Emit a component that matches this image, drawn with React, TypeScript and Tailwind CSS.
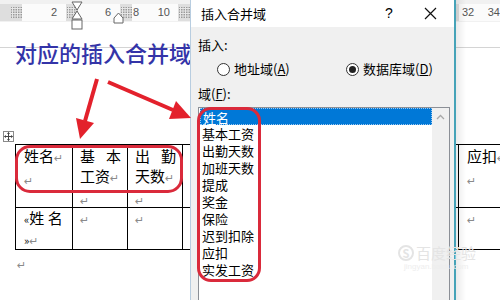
import React from "react";

const cjk = "font-['Noto_Sans_CJK_SC',sans-serif]";

function GridMark() {
  return (
    <svg width="11" height="11" viewBox="0 0 11 11">
      <rect x="0" y="0" width="11" height="11" fill="#9a9a9a" />
      {[1.5, 4, 6.5, 9].map((v) => (
        <g key={v}>
          <line x1={v} y1="0" x2={v} y2="11" stroke="#e6e6e6" strokeWidth="1" />
          <line x1="0" y1={v} x2="11" y2={v} stroke="#e6e6e6" strokeWidth="1" />
        </g>
      ))}
    </svg>
  );
}

function Para() {
  return <span className="text-[11px] text-[#8a8a8a] font-['DejaVu_Sans',sans-serif]">↵</span>;
}

function Ruler() {
  return (
    <div className="relative h-[22px] bg-[#f1f1f1] pt-[4px]">
      <div className="flex h-[17px] text-[11px] text-[#555] font-['Liberation_Sans',sans-serif] leading-[17px]">
        <div className="w-[10px] bg-[#dedede]" />
        <div className="w-[12px] bg-[#dedede] flex items-center justify-center"><GridMark /></div>
        <div className="w-[44px] bg-[#fbfbfb] flex justify-end pr-[9px]">2</div>
        <div className="w-[12px] bg-[#dedede] flex items-center justify-center"><GridMark /></div>
        <div className="w-[42px] bg-[#fbfbfb] flex justify-end pr-[9px]">6</div>
        <div className="w-[12px] bg-[#dedede] flex items-center justify-center"><GridMark /></div>
        <div className="w-[46px] bg-[#fbfbfb] flex justify-between pl-[1px] pr-[8px]">
          <span>8</span>
          <span>10</span>
        </div>
        <div className="w-[12px] bg-[#dedede] flex items-center justify-center"><GridMark /></div>
        <div className="w-[265px] bg-[#fbfbfb]" />
        <div className="w-[4px] bg-[#dedede]" />
        <div className="flex-1 bg-[#fbfbfb] flex justify-between pl-[3px]">
          <span>32</span>
          <span>34</span>
        </div>
      </div>
      {/* indent markers */}
      <svg className="absolute left-[71px] top-0" width="12" height="31" viewBox="0 0 12 31">
        <path d="M1 2 H11 L6 10 Z" fill="#fff" stroke="#666" />
        <path d="M6 11 L11 19 H1 Z" fill="#fff" stroke="#666" />
        <rect x="1" y="20" width="10" height="9" fill="#fff" stroke="#666" />
      </svg>
      <svg className="absolute left-[113px] top-[12px]" width="11" height="12" viewBox="0 0 11 12">
        <path d="M5.5 1 L10 6 V11 H1 V6 Z" fill="#fff" stroke="#666" />
      </svg>
    </div>
  );
}

function Row1() {
  return (
    <div className="flex h-[63px] border-b border-black text-[15px] leading-[20px] text-black">
      <div className="w-[57px] shrink-0 border-l border-black pl-[8px] pt-[1px]">
        <div>姓名<Para /></div>
        <div><Para /></div>
      </div>
      <div className="w-[55px] shrink-0 border-l border-black pl-[7px] pr-[6px] pt-[1px]">
        <div className="flex justify-between"><span>基</span><span>本</span></div>
        <div>工资<Para /></div>
        <div><Para /></div>
      </div>
      <div className="w-[55px] shrink-0 border-l border-black pl-[7px] pr-[6px] pt-[1px]">
        <div className="flex justify-between"><span>出</span><span>勤</span></div>
        <div>天数<Para /></div>
        <div><Para /></div>
      </div>
      <div className="w-[276px] shrink-0 border-l border-black" />
      <div className="w-[60px] shrink-0 border-l border-black pl-[8px] pt-[1px]">
        <div>应扣<Para /></div>
        <div><Para /></div>
      </div>
    </div>
  );
}

function Row2() {
  return (
    <div className="flex h-[42px] border-b border-black text-[15px] leading-[20px] text-black">
      <div className="w-[57px] shrink-0 border-l border-black pl-[8px]">
        <div>
          <span className="text-[11px]">«</span>姓 名
        </div>
        <div>
          <span className="text-[11px]">»</span>
          <Para />
        </div>
      </div>
      <div className="w-[55px] shrink-0 border-l border-black pl-[7px]"><Para /></div>
      <div className="w-[55px] shrink-0 border-l border-black pl-[7px]"><Para /></div>
      <div className="w-[276px] shrink-0 border-l border-black" />
      <div className="w-[60px] shrink-0 border-l border-black pl-[8px]"><Para /></div>
    </div>
  );
}

function Radio({ checked, label, hot }: { checked?: boolean; label: string; hot: string }) {
  return (
    <div className="flex items-center gap-[4px]">
      <div className="w-[13px] h-[13px] rounded-full border border-[#333] bg-white flex items-center justify-center">
        {checked && <div className="w-[7px] h-[7px] rounded-full bg-[#222]" />}
      </div>
      <span>
        {label}(<span className="underline">{hot}</span>)
      </span>
    </div>
  );
}

function Dialog() {
  const fields = ["姓名", "基本工资", "出勤天数", "加班天数", "提成", "奖金", "保险", "迟到扣除", "应扣", "实发工资"];
  return (
    <div className={`absolute left-[190px] top-0 w-[266px] h-[300px] bg-[#f0f0f0] border-l border-l-[#b8cde0] border-r-2 border-r-[#46a3b8] text-[13px] text-black ${cjk}`}>
      <div className="h-[27px] bg-white flex items-center pl-[10px]">
        <span className="flex-1">插入合并域</span>
        <span className="w-[12px] text-center mr-[29px] text-[14px] font-['Liberation_Sans',sans-serif]">?</span>
        <svg className="mr-[17px]" width="13" height="13" viewBox="0 0 13 13">
          <path d="M1 1 L12 12 M12 1 L1 12" stroke="#111" strokeWidth="1.2" />
        </svg>
      </div>
      <div className="h-[20px] leading-[20px] mt-[8px] pl-[7px]">插入:</div>
      <div className="h-[20px] mt-[4px] flex items-center pl-[26px]">
        <div className="w-[129px]">
          <Radio label="地址域" hot="A" />
        </div>
        <Radio checked label="数据库域" hot="D" />
      </div>
      <div className="h-[20px] leading-[20px] mt-[5px] pl-[7px]">
        域(<span className="underline">F</span>):
      </div>
      <div className="mt-[3px] ml-[7px] w-[252px] h-[200px] border border-[#8b8f96] bg-white flex">
        <div className="flex-1 pt-[0px]">
          {fields.map((f, i) => (
            <div
              key={f}
              className={`h-[17px] leading-[17px] ml-[1px] pl-[2px] ${
                i === 0 ? "bg-[#0078d7] text-white border border-dotted border-[#9cc8f0] leading-[15px]" : ""
              }`}
            >
              {f}
            </div>
          ))}
        </div>
        <div className="w-[17px] bg-[#f0f0f0] flex justify-center pt-[6px]">
          <svg width="9" height="6" viewBox="0 0 9 6">
            <path d="M1 5 L4.5 1.5 L8 5" fill="none" stroke="#a8a8a8" strokeWidth="1.3" />
          </svg>
        </div>
      </div>
    </div>
  );
}

export default function App() {
  return (
    <div className={`relative w-[500px] h-[300px] overflow-hidden bg-white ${cjk}`}>
      <div className="h-[48px] border-b border-[#d4d4d4]">
        <Ruler />
      </div>
      <div className="-mt-[4px] pl-[15px] h-[22px] leading-[22px] text-[22px] text-[#3434a8] font-['Liberation_Serif','Noto_Sans_CJK_SC',serif] font-medium">
        对应的插入合并域
      </div>

      {/* table move handle */}
      <div className="mt-[65px] ml-[3px] w-[11px] h-[11px] border border-[#8a8a8a] flex items-center justify-center">
        <svg width="9" height="9" viewBox="0 0 9 9">
          <path d="M4.5 0.5 V8.5 M0.5 4.5 H8.5" stroke="#444" strokeWidth="1" />
          <path d="M4.5 0 L3 2 H6 Z M4.5 9 L3 7 H6 Z M0 4.5 L2 3 V6 Z M9 4.5 L7 3 V6 Z" fill="#444" />
        </svg>
      </div>

      <div className="mt-[2px] ml-[15px] border-t border-black">
        <Row1 />
        <Row2 />
      </div>
      <div className="pl-[17px] mt-[2px] leading-[20px]"><Para /></div>

      {/* annotation: table header ring */}
      <div className="absolute left-[15px] top-[145px] w-[168px] h-[48px] rounded-[15px] border-[3px] border-[#da2a3b]" />

      <Dialog />

      {/* dialog shadow */}
      <div className="absolute left-[456px] top-0 w-[10px] h-[300px] bg-gradient-to-r from-[#00000014] to-transparent" />

      {/* annotation: field list ring */}
      <div className="absolute left-[197px] top-[107px] w-[64px] h-[175px] rounded-[14px] border-[3px] border-[#da2a3b]" />

      {/* arrows */}
      <svg className="absolute left-0 top-0" width="500" height="300" viewBox="0 0 500 300">
        <line x1="97" y1="79" x2="85" y2="121" stroke="#e3212c" strokeWidth="4" />
        <polygon points="80,139 94,123 76,118" fill="#e3212c" />
        <line x1="108" y1="82" x2="173" y2="110" stroke="#e3212c" strokeWidth="4" />
        <polygon points="191,118 169,119 176,101" fill="#e3212c" />
      </svg>

      {/* watermark */}
      <div className="absolute left-[398px] top-[244px] flex flex-col items-start text-[#e4e4e4]">
        <div className="flex items-center gap-[2px] text-[15px] leading-[18px]">
          <span className="w-[16px] h-[16px] rounded-full border-2 border-[#e4e4e4] text-[11px] leading-[12px] flex items-center justify-center font-bold">S</span>
          <span>百度经验</span>
        </div>
        <div className="text-[8px] leading-[10px] text-[#eeeeee] font-['Liberation_Sans',sans-serif] pl-[6px]">jingyan.baidu.com</div>
      </div>
    </div>
  );
}
